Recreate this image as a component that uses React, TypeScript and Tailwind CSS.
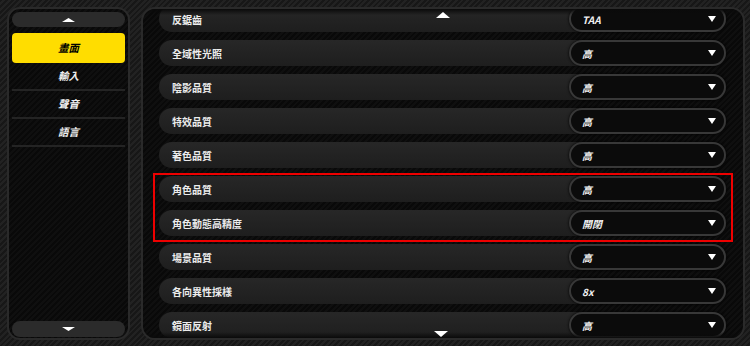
import React from "react";

const rows: [string, string][] = [
  ["反鋸齒", "TAA"],
  ["全域性光照", "高"],
  ["陰影品質", "高"],
  ["特效品質", "高"],
  ["著色品質", "高"],
  ["角色品質", "高"],
  ["角色動態高精度", "開閉"],
  ["場景品質", "高"],
  ["各向異性採樣", "8x"],
  ["鏡面反射", "高"],
];

const font = { fontFamily: '"Noto Sans CJK TC", "Noto Sans", sans-serif' };

function Tri({ down = true, w = 8, h = 6, color = "#fff" }: { down?: boolean; w?: number; h?: number; color?: string }) {
  return (
    <svg width={w} height={h} viewBox="0 0 8 6" preserveAspectRatio="none" className="block">
      {down ? <path d="M0 0 H8 L4 6 Z" fill={color} /> : <path d="M0 6 H8 L4 0 Z" fill={color} />}
    </svg>
  );
}

export default function App() {
  return (
    <div
      className="relative w-[750px] h-[346px] overflow-hidden flex gap-[11px] pl-[7px] pt-[7px] bg-[repeating-linear-gradient(135deg,#171717_0px,#171717_2px,#222222_2px,#222222_4px)]"
      style={font}
    >
      {/* left panel */}
      <div className="w-[123px] h-[333px] rounded-[13px] border-2 border-[#2a2a2a] bg-[repeating-linear-gradient(135deg,#090909_0px,#090909_2px,#0f0f0f_2px,#0f0f0f_4px)] flex flex-col px-[3px] pt-[3px] pb-[1px]">
        <div className="h-[15px] rounded-full bg-[#2b2b2b] flex items-center justify-center">
          <Tri down={false} w={13} h={4} />
        </div>
        <div className="mt-[6px] h-[30px] rounded-[4px] bg-[#ffdd00] flex items-center justify-center text-[10.5px] font-bold italic text-black">
          畫面
        </div>
        {["輸入", "聲音", "語言"].map((t) => (
          <div key={t} className="h-[28px] border-b-2 border-[#242424] flex items-center justify-center text-[10.5px] font-bold italic text-[#eeeeee]">
            {t}
          </div>
        ))}
        <div className="flex-1" />
        <div className="h-[16px] rounded-full bg-[#2b2b2b] flex items-center justify-center">
          <Tri down w={13} h={4} />
        </div>
      </div>

      {/* right panel */}
      <div className="relative w-[604px] h-[333px] rounded-[14px] border-2 border-[#2a2a2a] bg-[repeating-linear-gradient(135deg,#090909_0px,#090909_2px,#0f0f0f_2px,#0f0f0f_4px)] overflow-hidden">
        <div className="flex flex-col gap-[8px] pl-[16px] pr-[17px] -mt-[3px]">
          {rows.map(([label, value]) => (
            <div key={label} className="h-[26px] rounded-full bg-gradient-to-b from-[#272727] to-[#1e1e1e] flex items-center">
              <div className="flex-1 pl-[13px] text-[10px] font-bold text-[#ececec]">{label}</div>
              <div className="w-[157px] h-[26px] rounded-full border-2 border-[#383838] bg-[#0b0b0b] shadow-[0_0_3px_#000] flex items-center pl-[11px] pr-[8px]">
                <span className="flex-1 text-[10px] font-bold italic text-[#f0f0f0]">{value}</span>
                <Tri down w={8} h={6} />
              </div>
            </div>
          ))}
        </div>
        {/* top / bottom fades */}
        <div className="absolute left-0 right-0 top-0 h-[6px] bg-gradient-to-b from-[#0a0a0a] to-transparent" />
        <div className="absolute left-0 right-0 bottom-0 h-[6px] bg-gradient-to-t from-[#0a0a0a] to-transparent" />
        <div className="absolute left-[293px] top-[3px]">
          <Tri down={false} w={14} h={6} />
        </div>
        <div className="absolute left-[291px] bottom-[1px]">
          <Tri down w={14} h={6} />
        </div>
      </div>

      {/* red highlight annotation */}
      <div className="absolute left-[153px] top-[173px] w-[580px] h-[69px] border-2 border-[#ee0000]" />
    </div>
  );
}
